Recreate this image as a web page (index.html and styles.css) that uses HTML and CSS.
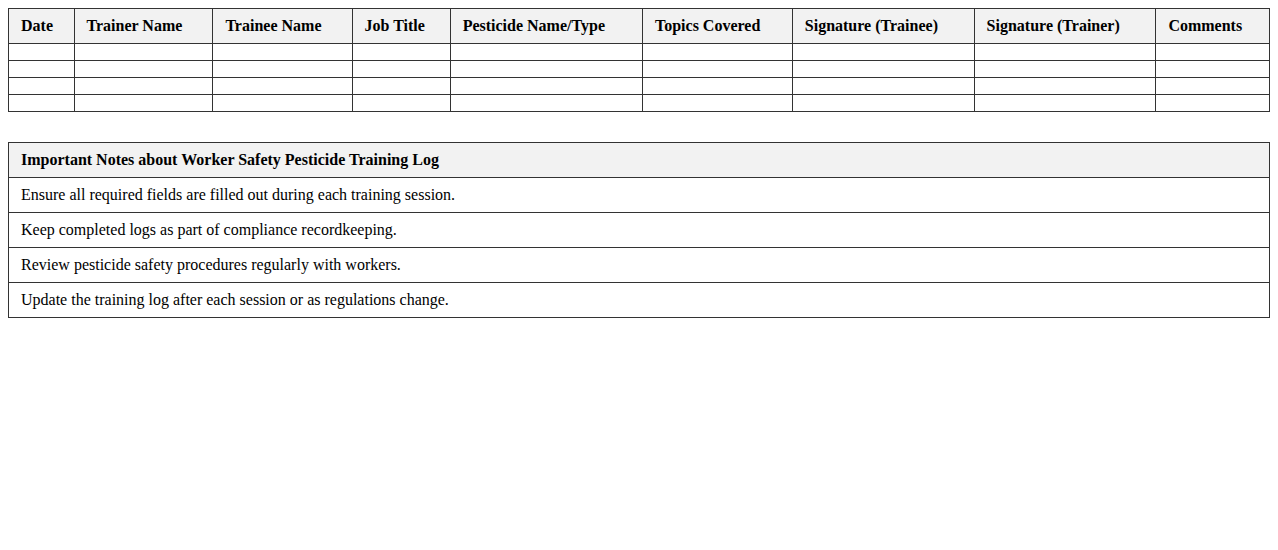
FILE: index.html
```html
<!DOCTYPE html>
<html>
<head>
<meta charset="utf-8">
<link rel="stylesheet" href="styles.css">
</head>
<body>
<table class="log">
  <thead>
    <tr>
      <th>Date</th>
      <th>Trainer Name</th>
      <th>Trainee Name</th>
      <th>Job Title</th>
      <th>Pesticide Name/Type</th>
      <th>Topics Covered</th>
      <th>Signature (Trainee)</th>
      <th>Signature (Trainer)</th>
      <th>Comments</th>
    </tr>
  </thead>
  <tbody>
    <tr><td></td><td></td><td></td><td></td><td></td><td></td><td></td><td></td><td></td></tr>
    <tr><td></td><td></td><td></td><td></td><td></td><td></td><td></td><td></td><td></td></tr>
    <tr><td></td><td></td><td></td><td></td><td></td><td></td><td></td><td></td><td></td></tr>
    <tr><td></td><td></td><td></td><td></td><td></td><td></td><td></td><td></td><td></td></tr>
  </tbody>
</table>
<table class="notes">
  <thead>
    <tr><th>Important Notes about Worker Safety Pesticide Training Log</th></tr>
  </thead>
  <tbody>
    <tr><td>Ensure all required fields are filled out during each training session.</td></tr>
    <tr><td>Keep completed logs as part of compliance recordkeeping.</td></tr>
    <tr><td>Review pesticide safety procedures regularly with workers.</td></tr>
    <tr><td>Update the training log after each session or as regulations change.</td></tr>
  </tbody>
</table>
</body>
</html>
```
FILE: styles.css
```css
body {
  margin: 8px;
  font-family: "Liberation Serif", "Times New Roman", serif;
  font-size: 16px;
  color: #000;
  background: #fff;
}
table {
  width: 100%;
  border-collapse: collapse;
}
.log {
  margin-bottom: 30px;
}
th, td {
  border: 1px solid #333;
  padding: 8px 12px;
  text-align: left;
  font-size: 16px;
}
th {
  background: #f2f2f2;
  font-weight: bold;
}
```
